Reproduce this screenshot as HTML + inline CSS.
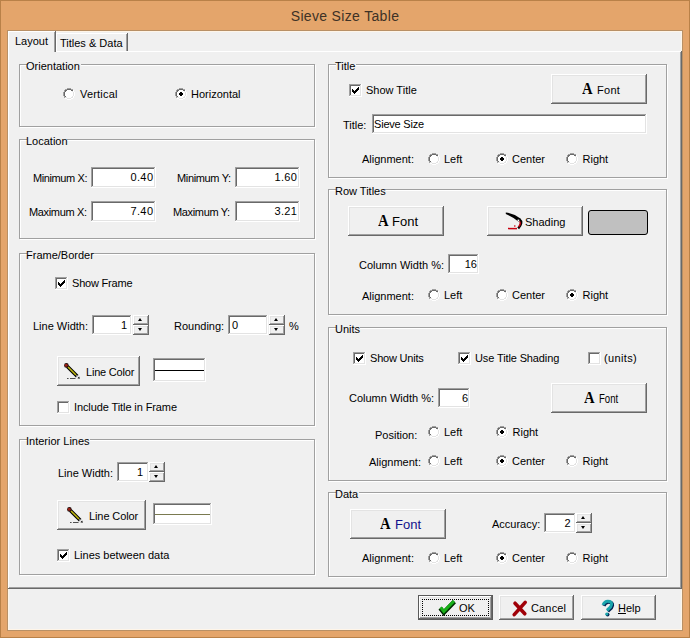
<!DOCTYPE html><html><head><meta charset="utf-8"><style>
html,body{margin:0;padding:0}
body{width:690px;height:638px;position:relative;overflow:hidden;background:#e4a56b;font-family:"Liberation Sans",sans-serif;font-size:11px;color:#000}
.t{position:absolute;line-height:13px;white-space:pre}
.gg{position:absolute;box-sizing:border-box;border:1px solid #a0a0a0}
.gw{position:absolute;box-sizing:border-box;border:1px solid #fff}
.lb{position:absolute;background:#f0f0f0}
.btn,.sb{position:absolute;box-sizing:border-box;background:#f0f0f0;box-shadow:inset -1px -1px #696969,inset 1px 1px #fff,inset -2px -2px #a0a0a0,inset 2px 2px #e3e3e3}
.ed{position:absolute;box-sizing:border-box;background:#fff;box-shadow:inset -1px -1px #fff,inset 1px 1px #a0a0a0,inset -2px -2px #e3e3e3,inset 2px 2px #696969}
.cb{position:absolute;width:13px;height:13px;box-sizing:border-box;background:#fff;box-shadow:inset -1px -1px #fff,inset 1px 1px #a0a0a0,inset -2px -2px #e3e3e3,inset 2px 2px #696969}
.rd{position:absolute;width:12px;height:12px}
.au,.ad{position:absolute;left:5px;width:0;height:0;border-left:2.5px solid transparent;border-right:2.5px solid transparent}
.au{top:3px;border-bottom:3px solid #000}
.ad{top:3px;border-top:3px solid #000}
.af{position:absolute;font-family:"Liberation Serif",serif;font-weight:bold;font-size:17px;line-height:20px;transform:scaleX(0.86);transform-origin:0 0}
svg{display:block}
</style></head><body>
<div style="position:absolute;left:0;top:0;width:690px;height:638px;box-sizing:border-box;border:1px solid #b98148"></div>
<div style="position:absolute;left:7px;top:30px;width:676px;height:601px;box-sizing:border-box;border:1px solid #b89066"></div>
<div class="t" style="left:0;width:690px;text-align:center;top:7px;line-height:18px;font-size:14px;letter-spacing:0.33px;color:#3e3226">Sieve Size Table</div>
<div style="position:absolute;left:8px;top:31px;width:674px;height:599px;background:#f0f0f0;box-sizing:border-box;border:1px solid #fff5e8"></div>
<div style="position:absolute;left:8px;top:51px;width:674px;height:538px;box-sizing:border-box;background:#f0f0f0;box-shadow:inset -1px -1px #696969,inset 1px 1px #fff,inset -2px -2px #a0a0a0"></div>
<div style="position:absolute;left:56px;top:33px;width:72px;height:18px;box-sizing:border-box;background:#f0f0f0;box-shadow:inset -1px 0 #696969,inset 1px 1px #fff,inset -2px 0 #a0a0a0"></div>
<div style="position:absolute;left:8px;top:31px;width:48px;height:21px;box-sizing:border-box;background:#f0f0f0;box-shadow:inset -1px 0 #696969,inset 1px 1px #fff,inset -2px 0 #a0a0a0"></div>
<div class="t" style="left:15px;top:35px;">Layout</div>
<div class="t" style="left:60px;top:37px;">Titles &amp; Data</div>
<div class="gw" style="left:20px;top:65px;width:296px;height:63px"></div>
<div class="gg" style="left:19px;top:64px;width:296px;height:63px"></div>
<div class="lb" style="left:27px;top:57px;width:54px;height:14px"></div>
<div class="t" style="left:26px;top:60px;">Orientation</div>
<div class="rd" style="left:63px;top:88px"><svg width="12" height="12" style="position:absolute;left:0;top:0" shape-rendering="crispEdges"><path fill="#a0a0a0" d="M4 0h4v1h-4zM2 1h2v1h-2zM8 1h2v1h-2zM1 2h1v2h-1zM0 4h1v4h-1zM1 8h1v2h-1z"/><path fill="#fff" d="M10 2h1v2h-1zM11 4h1v4h-1zM10 8h1v2h-1zM8 10h2v1h-2zM2 10h2v1h-2zM4 11h4v1h-4z"/><path fill="#696969" d="M4 1h4v1h-4zM2 2h2v1h-2zM8 2h2v1h-2zM2 3h1v1h-1zM1 4h1v4h-1zM2 8h1v1h-1z"/><path fill="#e3e3e3" d="M9 3h1v1h-1zM10 4h1v4h-1zM9 8h1v1h-1zM8 9h2v1h-2zM2 9h2v1h-2zM4 10h4v1h-4z"/><path fill="#fff" d="M4 2h4v1h-4zM3 3h6v1h-6zM2 4h8v4h-8zM3 8h6v1h-6zM4 9h4v1h-4z"/></svg></div>
<div class="t" style="left:80px;top:88px;letter-spacing:0.2px;">Vertical</div>
<div class="rd" style="left:175px;top:88px"><svg width="12" height="12" style="position:absolute;left:0;top:0" shape-rendering="crispEdges"><path fill="#a0a0a0" d="M4 0h4v1h-4zM2 1h2v1h-2zM8 1h2v1h-2zM1 2h1v2h-1zM0 4h1v4h-1zM1 8h1v2h-1z"/><path fill="#fff" d="M10 2h1v2h-1zM11 4h1v4h-1zM10 8h1v2h-1zM8 10h2v1h-2zM2 10h2v1h-2zM4 11h4v1h-4z"/><path fill="#696969" d="M4 1h4v1h-4zM2 2h2v1h-2zM8 2h2v1h-2zM2 3h1v1h-1zM1 4h1v4h-1zM2 8h1v1h-1z"/><path fill="#e3e3e3" d="M9 3h1v1h-1zM10 4h1v4h-1zM9 8h1v1h-1zM8 9h2v1h-2zM2 9h2v1h-2zM4 10h4v1h-4z"/><path fill="#fff" d="M4 2h4v1h-4zM3 3h6v1h-6zM2 4h8v4h-8zM3 8h6v1h-6zM4 9h4v1h-4z"/><path fill="#000" d="M5 4h2v1h-2zM4 5h4v2h-4zM5 7h2v1h-2z"/></svg></div>
<div class="t" style="left:191px;top:88px;">Horizontal</div>
<div class="gw" style="left:20px;top:140px;width:296px;height:100px"></div>
<div class="gg" style="left:19px;top:139px;width:296px;height:100px"></div>
<div class="lb" style="left:27px;top:132px;width:40px;height:14px"></div>
<div class="t" style="left:26px;top:135px;">Location</div>
<div class="t" style="left:33px;top:172px;letter-spacing:-0.4px;">Minimum X:</div>
<div class="ed" style="left:91px;top:167px;width:65px;height:21px;"></div>
<div class="t" style="left:-46.599999999999994px;width:200px;text-align:right;top:171px;letter-spacing:0.4px;">0.40</div>
<div class="t" style="left:177px;top:172px;letter-spacing:-0.35px;">Minimum Y:</div>
<div class="ed" style="left:235px;top:167px;width:65px;height:21px;"></div>
<div class="t" style="left:97.39999999999998px;width:200px;text-align:right;top:171px;letter-spacing:0.4px;">1.60</div>
<div class="t" style="left:29px;top:206px;letter-spacing:-0.35px;">Maximum X:</div>
<div class="ed" style="left:91px;top:201px;width:65px;height:21px;"></div>
<div class="t" style="left:-46.599999999999994px;width:200px;text-align:right;top:205px;letter-spacing:0.4px;">7.40</div>
<div class="t" style="left:173px;top:206px;letter-spacing:-0.35px;">Maximum Y:</div>
<div class="ed" style="left:235px;top:201px;width:65px;height:21px;"></div>
<div class="t" style="left:97.39999999999998px;width:200px;text-align:right;top:205px;letter-spacing:0.4px;">3.21</div>
<div class="gw" style="left:20px;top:254px;width:296px;height:173px"></div>
<div class="gg" style="left:19px;top:253px;width:296px;height:173px"></div>
<div class="lb" style="left:27px;top:246px;width:65px;height:14px"></div>
<div class="t" style="left:26px;top:249px;">Frame/Border</div>
<div class="cb" style="left:55px;top:277px"><svg width="7" height="7" style="position:absolute;left:3px;top:3px" shape-rendering="crispEdges"><path fill="#000" d="M0 2h1v3h-1zM1 3h1v3h-1zM2 4h1v3h-1zM3 3h1v3h-1zM4 2h1v3h-1zM5 1h1v3h-1zM6 0h1v3h-1z"/></svg></div>
<div class="t" style="left:72px;top:277px;letter-spacing:-0.2px;">Show Frame</div>
<div class="t" style="left:33px;top:320px;">Line Width:</div>
<div class="ed" style="left:92px;top:315px;width:40px;height:20px;"></div>
<div class="t" style="left:-73px;width:200px;text-align:right;top:319px;">1</div>
<div class="sb" style="left:133px;top:315px;width:16px;height:10px;"><div class="au"></div></div>
<div class="sb" style="left:133px;top:325px;width:16px;height:10px;"><div class="ad"></div></div>
<div class="t" style="left:174px;top:320px;">Rounding:</div>
<div class="ed" style="left:228px;top:315px;width:40px;height:20px;"></div>
<div class="t" style="left:232px;top:319px;">0</div>
<div class="sb" style="left:269px;top:315px;width:16px;height:10px;"><div class="au"></div></div>
<div class="sb" style="left:269px;top:325px;width:16px;height:10px;"><div class="ad"></div></div>
<div class="t" style="left:289px;top:320px;">%</div>
<div class="btn" style="left:57px;top:356px;width:83px;height:30px;"></div>
<svg style="position:absolute;left:62px;top:361px" width="20" height="20"><line x1="5.4" y1="5.4" x2="15.2" y2="15.2" stroke="#000" stroke-width="3.6"/><line x1="5.8" y1="5.8" x2="14" y2="14" stroke="#c4bc10" stroke-width="1.5"/><circle cx="4.4" cy="4.4" r="2.3" fill="#1a0a08"/><circle cx="4.2" cy="4.2" r="1.5" fill="#9a2014"/><line x1="14.4" y1="14.4" x2="15.8" y2="15.8" stroke="#d8d8d8" stroke-width="1.4"/><path d="M17.8 17.8l-2.4 -0.6l1.8 -1.8z" fill="#000"/><path d="M5 17.5h1.6M8 17.5h5.5" stroke="#505050" stroke-width="1"/></svg>
<div class="t" style="left:86px;top:366px;letter-spacing:-0.2px;">Line Color</div>
<div class="ed" style="left:153px;top:358px;width:53px;height:24px;"></div>
<div style="position:absolute;left:155px;top:370px;width:49px;height:1px;background:#000"></div>
<div class="cb" style="left:57px;top:401px"></div>
<div class="t" style="left:74px;top:401px;letter-spacing:-0.1px;">Include Title in Frame</div>
<div class="gw" style="left:20px;top:440px;width:296px;height:136px"></div>
<div class="gg" style="left:19px;top:439px;width:296px;height:136px"></div>
<div class="lb" style="left:27px;top:432px;width:63px;height:14px"></div>
<div class="t" style="left:26px;top:435px;">Interior Lines</div>
<div class="t" style="left:58px;top:467px;">Line Width:</div>
<div class="ed" style="left:117px;top:462px;width:32px;height:20px;"></div>
<div class="t" style="left:-57px;width:200px;text-align:right;top:466px;">1</div>
<div class="sb" style="left:149px;top:462px;width:16px;height:10px;"><div class="au"></div></div>
<div class="sb" style="left:149px;top:472px;width:16px;height:10px;"><div class="ad"></div></div>
<div class="btn" style="left:57px;top:500px;width:89px;height:30px;"></div>
<svg style="position:absolute;left:65px;top:505px" width="20" height="20"><line x1="5.4" y1="5.4" x2="15.2" y2="15.2" stroke="#000" stroke-width="3.6"/><line x1="5.8" y1="5.8" x2="14" y2="14" stroke="#c4bc10" stroke-width="1.5"/><circle cx="4.4" cy="4.4" r="2.3" fill="#1a0a08"/><circle cx="4.2" cy="4.2" r="1.5" fill="#9a2014"/><line x1="14.4" y1="14.4" x2="15.8" y2="15.8" stroke="#d8d8d8" stroke-width="1.4"/><path d="M17.8 17.8l-2.4 -0.6l1.8 -1.8z" fill="#000"/><path d="M5 17.5h1.6M8 17.5h5.5" stroke="#505050" stroke-width="1"/></svg>
<div class="t" style="left:89px;top:510px;letter-spacing:-0.1px;">Line Color</div>
<div class="ed" style="left:153px;top:503px;width:59px;height:22px;"></div>
<div style="position:absolute;left:155px;top:514px;width:55px;height:1px;background:#7a7a50"></div>
<div class="cb" style="left:57px;top:549px"><svg width="7" height="7" style="position:absolute;left:3px;top:3px" shape-rendering="crispEdges"><path fill="#000" d="M0 2h1v3h-1zM1 3h1v3h-1zM2 4h1v3h-1zM3 3h1v3h-1zM4 2h1v3h-1zM5 1h1v3h-1zM6 0h1v3h-1z"/></svg></div>
<div class="t" style="left:74px;top:549px;">Lines between data</div>
<div class="gw" style="left:329px;top:65px;width:339px;height:114px"></div>
<div class="gg" style="left:328px;top:64px;width:339px;height:114px"></div>
<div class="lb" style="left:336px;top:57px;width:20px;height:14px"></div>
<div class="t" style="left:335px;top:60px;">Title</div>
<div class="cb" style="left:349px;top:84px"><svg width="7" height="7" style="position:absolute;left:3px;top:3px" shape-rendering="crispEdges"><path fill="#000" d="M0 2h1v3h-1zM1 3h1v3h-1zM2 4h1v3h-1zM3 3h1v3h-1zM4 2h1v3h-1zM5 1h1v3h-1zM6 0h1v3h-1z"/></svg></div>
<div class="t" style="left:366px;top:84px;">Show Title</div>
<div class="btn" style="left:551px;top:74px;width:96px;height:30px;"></div>
<div class="af" style="left:582px;top:79px">A</div>
<div class="t" style="left:597px;top:84px;letter-spacing:0.3px;">Font</div>
<div class="t" style="left:343px;top:119px;">Title:</div>
<div class="ed" style="left:372px;top:114px;width:275px;height:20px;"></div>
<div class="t" style="left:374px;top:118px;letter-spacing:-0.2px;">Sieve Size</div>
<div class="t" style="left:362px;top:153px;">Alignment:</div>
<div class="rd" style="left:428px;top:153px"><svg width="12" height="12" style="position:absolute;left:0;top:0" shape-rendering="crispEdges"><path fill="#a0a0a0" d="M4 0h4v1h-4zM2 1h2v1h-2zM8 1h2v1h-2zM1 2h1v2h-1zM0 4h1v4h-1zM1 8h1v2h-1z"/><path fill="#fff" d="M10 2h1v2h-1zM11 4h1v4h-1zM10 8h1v2h-1zM8 10h2v1h-2zM2 10h2v1h-2zM4 11h4v1h-4z"/><path fill="#696969" d="M4 1h4v1h-4zM2 2h2v1h-2zM8 2h2v1h-2zM2 3h1v1h-1zM1 4h1v4h-1zM2 8h1v1h-1z"/><path fill="#e3e3e3" d="M9 3h1v1h-1zM10 4h1v4h-1zM9 8h1v1h-1zM8 9h2v1h-2zM2 9h2v1h-2zM4 10h4v1h-4z"/><path fill="#fff" d="M4 2h4v1h-4zM3 3h6v1h-6zM2 4h8v4h-8zM3 8h6v1h-6zM4 9h4v1h-4z"/></svg></div>
<div class="t" style="left:444px;top:153px;">Left</div>
<div class="rd" style="left:496px;top:153px"><svg width="12" height="12" style="position:absolute;left:0;top:0" shape-rendering="crispEdges"><path fill="#a0a0a0" d="M4 0h4v1h-4zM2 1h2v1h-2zM8 1h2v1h-2zM1 2h1v2h-1zM0 4h1v4h-1zM1 8h1v2h-1z"/><path fill="#fff" d="M10 2h1v2h-1zM11 4h1v4h-1zM10 8h1v2h-1zM8 10h2v1h-2zM2 10h2v1h-2zM4 11h4v1h-4z"/><path fill="#696969" d="M4 1h4v1h-4zM2 2h2v1h-2zM8 2h2v1h-2zM2 3h1v1h-1zM1 4h1v4h-1zM2 8h1v1h-1z"/><path fill="#e3e3e3" d="M9 3h1v1h-1zM10 4h1v4h-1zM9 8h1v1h-1zM8 9h2v1h-2zM2 9h2v1h-2zM4 10h4v1h-4z"/><path fill="#fff" d="M4 2h4v1h-4zM3 3h6v1h-6zM2 4h8v4h-8zM3 8h6v1h-6zM4 9h4v1h-4z"/><path fill="#000" d="M5 4h2v1h-2zM4 5h4v2h-4zM5 7h2v1h-2z"/></svg></div>
<div class="t" style="left:512px;top:153px;">Center</div>
<div class="rd" style="left:566px;top:153px"><svg width="12" height="12" style="position:absolute;left:0;top:0" shape-rendering="crispEdges"><path fill="#a0a0a0" d="M4 0h4v1h-4zM2 1h2v1h-2zM8 1h2v1h-2zM1 2h1v2h-1zM0 4h1v4h-1zM1 8h1v2h-1z"/><path fill="#fff" d="M10 2h1v2h-1zM11 4h1v4h-1zM10 8h1v2h-1zM8 10h2v1h-2zM2 10h2v1h-2zM4 11h4v1h-4z"/><path fill="#696969" d="M4 1h4v1h-4zM2 2h2v1h-2zM8 2h2v1h-2zM2 3h1v1h-1zM1 4h1v4h-1zM2 8h1v1h-1z"/><path fill="#e3e3e3" d="M9 3h1v1h-1zM10 4h1v4h-1zM9 8h1v1h-1zM8 9h2v1h-2zM2 9h2v1h-2zM4 10h4v1h-4z"/><path fill="#fff" d="M4 2h4v1h-4zM3 3h6v1h-6zM2 4h8v4h-8zM3 8h6v1h-6zM4 9h4v1h-4z"/></svg></div>
<div class="t" style="left:582.5px;top:153px;">Right</div>
<div class="gw" style="left:329px;top:190px;width:339px;height:126px"></div>
<div class="gg" style="left:328px;top:189px;width:339px;height:126px"></div>
<div class="lb" style="left:336px;top:182px;width:49px;height:14px"></div>
<div class="t" style="left:335px;top:185px;">Row Titles</div>
<div class="btn" style="left:348px;top:206px;width:96px;height:30px;"></div>
<div class="af" style="left:378px;top:211px">A</div>
<div class="t" style="left:392px;top:214px;font-size:13px;line-height:15px">Font</div>
<div class="btn" style="left:487px;top:206px;width:96px;height:30px;"></div>
<div class="t" style="left:525px;top:216px;">Shading</div>
<svg style="position:absolute;left:500px;top:208px" width="28" height="26"><path d="M5.8 4.4 Q13.5 5.4 20.4 10.4 L18.6 13.8 Q13 8.8 5.8 6 Z" fill="#000"/><path d="M19.4 11.2 Q23.6 14.6 18.2 20.4" stroke="#000" stroke-width="2.4" fill="none"/><path d="M19.6 13.4 Q21.4 15.6 18.6 19" stroke="#d00010" stroke-width="1.3" fill="none"/><rect x="17.6" y="11.6" width="1.6" height="1.6" fill="#fff"/><path d="M8 20.6 L17 20.6" stroke="#c80010" stroke-width="1.5"/><rect x="14" y="17.4" width="1.5" height="1.2" fill="#c80010"/></svg>
<div style="position:absolute;left:588px;top:210px;width:60px;height:25px;box-sizing:border-box;border:1px solid #000;border-radius:3px;background:#c0c0c0"></div>
<div class="t" style="left:359px;top:259px;">Column Width %:</div>
<div class="ed" style="left:448px;top:254px;width:31px;height:20px;"></div>
<div class="t" style="left:277px;width:200px;text-align:right;top:258px;">16</div>
<div class="t" style="left:362px;top:290px;">Alignment:</div>
<div class="rd" style="left:428px;top:289px"><svg width="12" height="12" style="position:absolute;left:0;top:0" shape-rendering="crispEdges"><path fill="#a0a0a0" d="M4 0h4v1h-4zM2 1h2v1h-2zM8 1h2v1h-2zM1 2h1v2h-1zM0 4h1v4h-1zM1 8h1v2h-1z"/><path fill="#fff" d="M10 2h1v2h-1zM11 4h1v4h-1zM10 8h1v2h-1zM8 10h2v1h-2zM2 10h2v1h-2zM4 11h4v1h-4z"/><path fill="#696969" d="M4 1h4v1h-4zM2 2h2v1h-2zM8 2h2v1h-2zM2 3h1v1h-1zM1 4h1v4h-1zM2 8h1v1h-1z"/><path fill="#e3e3e3" d="M9 3h1v1h-1zM10 4h1v4h-1zM9 8h1v1h-1zM8 9h2v1h-2zM2 9h2v1h-2zM4 10h4v1h-4z"/><path fill="#fff" d="M4 2h4v1h-4zM3 3h6v1h-6zM2 4h8v4h-8zM3 8h6v1h-6zM4 9h4v1h-4z"/></svg></div>
<div class="t" style="left:444px;top:289px;">Left</div>
<div class="rd" style="left:496px;top:289px"><svg width="12" height="12" style="position:absolute;left:0;top:0" shape-rendering="crispEdges"><path fill="#a0a0a0" d="M4 0h4v1h-4zM2 1h2v1h-2zM8 1h2v1h-2zM1 2h1v2h-1zM0 4h1v4h-1zM1 8h1v2h-1z"/><path fill="#fff" d="M10 2h1v2h-1zM11 4h1v4h-1zM10 8h1v2h-1zM8 10h2v1h-2zM2 10h2v1h-2zM4 11h4v1h-4z"/><path fill="#696969" d="M4 1h4v1h-4zM2 2h2v1h-2zM8 2h2v1h-2zM2 3h1v1h-1zM1 4h1v4h-1zM2 8h1v1h-1z"/><path fill="#e3e3e3" d="M9 3h1v1h-1zM10 4h1v4h-1zM9 8h1v1h-1zM8 9h2v1h-2zM2 9h2v1h-2zM4 10h4v1h-4z"/><path fill="#fff" d="M4 2h4v1h-4zM3 3h6v1h-6zM2 4h8v4h-8zM3 8h6v1h-6zM4 9h4v1h-4z"/></svg></div>
<div class="t" style="left:512px;top:289px;">Center</div>
<div class="rd" style="left:566px;top:289px"><svg width="12" height="12" style="position:absolute;left:0;top:0" shape-rendering="crispEdges"><path fill="#a0a0a0" d="M4 0h4v1h-4zM2 1h2v1h-2zM8 1h2v1h-2zM1 2h1v2h-1zM0 4h1v4h-1zM1 8h1v2h-1z"/><path fill="#fff" d="M10 2h1v2h-1zM11 4h1v4h-1zM10 8h1v2h-1zM8 10h2v1h-2zM2 10h2v1h-2zM4 11h4v1h-4z"/><path fill="#696969" d="M4 1h4v1h-4zM2 2h2v1h-2zM8 2h2v1h-2zM2 3h1v1h-1zM1 4h1v4h-1zM2 8h1v1h-1z"/><path fill="#e3e3e3" d="M9 3h1v1h-1zM10 4h1v4h-1zM9 8h1v1h-1zM8 9h2v1h-2zM2 9h2v1h-2zM4 10h4v1h-4z"/><path fill="#fff" d="M4 2h4v1h-4zM3 3h6v1h-6zM2 4h8v4h-8zM3 8h6v1h-6zM4 9h4v1h-4z"/><path fill="#000" d="M5 4h2v1h-2zM4 5h4v2h-4zM5 7h2v1h-2z"/></svg></div>
<div class="t" style="left:582.5px;top:289px;">Right</div>
<div class="gw" style="left:329px;top:328px;width:339px;height:154px"></div>
<div class="gg" style="left:328px;top:327px;width:339px;height:154px"></div>
<div class="lb" style="left:336px;top:320px;width:24px;height:14px"></div>
<div class="t" style="left:335px;top:323px;">Units</div>
<div class="cb" style="left:353px;top:352px"><svg width="7" height="7" style="position:absolute;left:3px;top:3px" shape-rendering="crispEdges"><path fill="#000" d="M0 2h1v3h-1zM1 3h1v3h-1zM2 4h1v3h-1zM3 3h1v3h-1zM4 2h1v3h-1zM5 1h1v3h-1zM6 0h1v3h-1z"/></svg></div>
<div class="t" style="left:370px;top:352px;letter-spacing:-0.2px;">Show Units</div>
<div class="cb" style="left:458px;top:352px"><svg width="7" height="7" style="position:absolute;left:3px;top:3px" shape-rendering="crispEdges"><path fill="#000" d="M0 2h1v3h-1zM1 3h1v3h-1zM2 4h1v3h-1zM3 3h1v3h-1zM4 2h1v3h-1zM5 1h1v3h-1zM6 0h1v3h-1z"/></svg></div>
<div class="t" style="left:475px;top:352px;letter-spacing:-0.12px;">Use Title Shading</div>
<div class="cb" style="left:588px;top:352px"></div>
<div class="t" style="left:604px;top:352px;letter-spacing:0.35px;">(units)</div>
<div class="t" style="left:349px;top:392px;">Column Width %:</div>
<div class="ed" style="left:438px;top:388px;width:32px;height:20px;"></div>
<div class="t" style="left:268px;width:200px;text-align:right;top:392px;">6</div>
<div class="btn" style="left:551px;top:383px;width:96px;height:30px;"></div>
<div class="af" style="left:584px;top:388px">A</div>
<div class="t" style="left:599px;top:392px;font-size:12px;line-height:15px;transform:scaleX(0.8);transform-origin:0 0">Font</div>
<div class="t" style="left:375px;top:429px;">Position:</div>
<div class="rd" style="left:428px;top:426px"><svg width="12" height="12" style="position:absolute;left:0;top:0" shape-rendering="crispEdges"><path fill="#a0a0a0" d="M4 0h4v1h-4zM2 1h2v1h-2zM8 1h2v1h-2zM1 2h1v2h-1zM0 4h1v4h-1zM1 8h1v2h-1z"/><path fill="#fff" d="M10 2h1v2h-1zM11 4h1v4h-1zM10 8h1v2h-1zM8 10h2v1h-2zM2 10h2v1h-2zM4 11h4v1h-4z"/><path fill="#696969" d="M4 1h4v1h-4zM2 2h2v1h-2zM8 2h2v1h-2zM2 3h1v1h-1zM1 4h1v4h-1zM2 8h1v1h-1z"/><path fill="#e3e3e3" d="M9 3h1v1h-1zM10 4h1v4h-1zM9 8h1v1h-1zM8 9h2v1h-2zM2 9h2v1h-2zM4 10h4v1h-4z"/><path fill="#fff" d="M4 2h4v1h-4zM3 3h6v1h-6zM2 4h8v4h-8zM3 8h6v1h-6zM4 9h4v1h-4z"/></svg></div>
<div class="t" style="left:444px;top:426px;">Left</div>
<div class="rd" style="left:496px;top:426px"><svg width="12" height="12" style="position:absolute;left:0;top:0" shape-rendering="crispEdges"><path fill="#a0a0a0" d="M4 0h4v1h-4zM2 1h2v1h-2zM8 1h2v1h-2zM1 2h1v2h-1zM0 4h1v4h-1zM1 8h1v2h-1z"/><path fill="#fff" d="M10 2h1v2h-1zM11 4h1v4h-1zM10 8h1v2h-1zM8 10h2v1h-2zM2 10h2v1h-2zM4 11h4v1h-4z"/><path fill="#696969" d="M4 1h4v1h-4zM2 2h2v1h-2zM8 2h2v1h-2zM2 3h1v1h-1zM1 4h1v4h-1zM2 8h1v1h-1z"/><path fill="#e3e3e3" d="M9 3h1v1h-1zM10 4h1v4h-1zM9 8h1v1h-1zM8 9h2v1h-2zM2 9h2v1h-2zM4 10h4v1h-4z"/><path fill="#fff" d="M4 2h4v1h-4zM3 3h6v1h-6zM2 4h8v4h-8zM3 8h6v1h-6zM4 9h4v1h-4z"/><path fill="#000" d="M5 4h2v1h-2zM4 5h4v2h-4zM5 7h2v1h-2z"/></svg></div>
<div class="t" style="left:512.5px;top:426px;">Right</div>
<div class="t" style="left:369px;top:456px;">Alignment:</div>
<div class="rd" style="left:428px;top:455px"><svg width="12" height="12" style="position:absolute;left:0;top:0" shape-rendering="crispEdges"><path fill="#a0a0a0" d="M4 0h4v1h-4zM2 1h2v1h-2zM8 1h2v1h-2zM1 2h1v2h-1zM0 4h1v4h-1zM1 8h1v2h-1z"/><path fill="#fff" d="M10 2h1v2h-1zM11 4h1v4h-1zM10 8h1v2h-1zM8 10h2v1h-2zM2 10h2v1h-2zM4 11h4v1h-4z"/><path fill="#696969" d="M4 1h4v1h-4zM2 2h2v1h-2zM8 2h2v1h-2zM2 3h1v1h-1zM1 4h1v4h-1zM2 8h1v1h-1z"/><path fill="#e3e3e3" d="M9 3h1v1h-1zM10 4h1v4h-1zM9 8h1v1h-1zM8 9h2v1h-2zM2 9h2v1h-2zM4 10h4v1h-4z"/><path fill="#fff" d="M4 2h4v1h-4zM3 3h6v1h-6zM2 4h8v4h-8zM3 8h6v1h-6zM4 9h4v1h-4z"/></svg></div>
<div class="t" style="left:444px;top:455px;">Left</div>
<div class="rd" style="left:496px;top:455px"><svg width="12" height="12" style="position:absolute;left:0;top:0" shape-rendering="crispEdges"><path fill="#a0a0a0" d="M4 0h4v1h-4zM2 1h2v1h-2zM8 1h2v1h-2zM1 2h1v2h-1zM0 4h1v4h-1zM1 8h1v2h-1z"/><path fill="#fff" d="M10 2h1v2h-1zM11 4h1v4h-1zM10 8h1v2h-1zM8 10h2v1h-2zM2 10h2v1h-2zM4 11h4v1h-4z"/><path fill="#696969" d="M4 1h4v1h-4zM2 2h2v1h-2zM8 2h2v1h-2zM2 3h1v1h-1zM1 4h1v4h-1zM2 8h1v1h-1z"/><path fill="#e3e3e3" d="M9 3h1v1h-1zM10 4h1v4h-1zM9 8h1v1h-1zM8 9h2v1h-2zM2 9h2v1h-2zM4 10h4v1h-4z"/><path fill="#fff" d="M4 2h4v1h-4zM3 3h6v1h-6zM2 4h8v4h-8zM3 8h6v1h-6zM4 9h4v1h-4z"/><path fill="#000" d="M5 4h2v1h-2zM4 5h4v2h-4zM5 7h2v1h-2z"/></svg></div>
<div class="t" style="left:512px;top:455px;">Center</div>
<div class="rd" style="left:566px;top:455px"><svg width="12" height="12" style="position:absolute;left:0;top:0" shape-rendering="crispEdges"><path fill="#a0a0a0" d="M4 0h4v1h-4zM2 1h2v1h-2zM8 1h2v1h-2zM1 2h1v2h-1zM0 4h1v4h-1zM1 8h1v2h-1z"/><path fill="#fff" d="M10 2h1v2h-1zM11 4h1v4h-1zM10 8h1v2h-1zM8 10h2v1h-2zM2 10h2v1h-2zM4 11h4v1h-4z"/><path fill="#696969" d="M4 1h4v1h-4zM2 2h2v1h-2zM8 2h2v1h-2zM2 3h1v1h-1zM1 4h1v4h-1zM2 8h1v1h-1z"/><path fill="#e3e3e3" d="M9 3h1v1h-1zM10 4h1v4h-1zM9 8h1v1h-1zM8 9h2v1h-2zM2 9h2v1h-2zM4 10h4v1h-4z"/><path fill="#fff" d="M4 2h4v1h-4zM3 3h6v1h-6zM2 4h8v4h-8zM3 8h6v1h-6zM4 9h4v1h-4z"/></svg></div>
<div class="t" style="left:582.5px;top:455px;">Right</div>
<div class="gw" style="left:329px;top:493px;width:339px;height:85px"></div>
<div class="gg" style="left:328px;top:492px;width:339px;height:85px"></div>
<div class="lb" style="left:336px;top:485px;width:23px;height:14px"></div>
<div class="t" style="left:335px;top:488px;">Data</div>
<div class="btn" style="left:350px;top:509px;width:96px;height:30px;"></div>
<div class="af" style="left:380px;top:514px">A</div>
<div class="t" style="left:395px;top:517px;font-size:13px;line-height:15px;color:#10108c">Font</div>
<div class="t" style="left:492px;top:518px;">Accuracy:</div>
<div class="ed" style="left:544px;top:513px;width:32px;height:20px;"></div>
<div class="t" style="left:370.5px;width:200px;text-align:right;top:517px;">2</div>
<div class="sb" style="left:576px;top:513px;width:16px;height:10px;"><div class="au"></div></div>
<div class="sb" style="left:576px;top:523px;width:16px;height:10px;"><div class="ad"></div></div>
<div class="t" style="left:362px;top:552px;">Alignment:</div>
<div class="rd" style="left:428px;top:552px"><svg width="12" height="12" style="position:absolute;left:0;top:0" shape-rendering="crispEdges"><path fill="#a0a0a0" d="M4 0h4v1h-4zM2 1h2v1h-2zM8 1h2v1h-2zM1 2h1v2h-1zM0 4h1v4h-1zM1 8h1v2h-1z"/><path fill="#fff" d="M10 2h1v2h-1zM11 4h1v4h-1zM10 8h1v2h-1zM8 10h2v1h-2zM2 10h2v1h-2zM4 11h4v1h-4z"/><path fill="#696969" d="M4 1h4v1h-4zM2 2h2v1h-2zM8 2h2v1h-2zM2 3h1v1h-1zM1 4h1v4h-1zM2 8h1v1h-1z"/><path fill="#e3e3e3" d="M9 3h1v1h-1zM10 4h1v4h-1zM9 8h1v1h-1zM8 9h2v1h-2zM2 9h2v1h-2zM4 10h4v1h-4z"/><path fill="#fff" d="M4 2h4v1h-4zM3 3h6v1h-6zM2 4h8v4h-8zM3 8h6v1h-6zM4 9h4v1h-4z"/></svg></div>
<div class="t" style="left:444px;top:552px;">Left</div>
<div class="rd" style="left:496px;top:552px"><svg width="12" height="12" style="position:absolute;left:0;top:0" shape-rendering="crispEdges"><path fill="#a0a0a0" d="M4 0h4v1h-4zM2 1h2v1h-2zM8 1h2v1h-2zM1 2h1v2h-1zM0 4h1v4h-1zM1 8h1v2h-1z"/><path fill="#fff" d="M10 2h1v2h-1zM11 4h1v4h-1zM10 8h1v2h-1zM8 10h2v1h-2zM2 10h2v1h-2zM4 11h4v1h-4z"/><path fill="#696969" d="M4 1h4v1h-4zM2 2h2v1h-2zM8 2h2v1h-2zM2 3h1v1h-1zM1 4h1v4h-1zM2 8h1v1h-1z"/><path fill="#e3e3e3" d="M9 3h1v1h-1zM10 4h1v4h-1zM9 8h1v1h-1zM8 9h2v1h-2zM2 9h2v1h-2zM4 10h4v1h-4z"/><path fill="#fff" d="M4 2h4v1h-4zM3 3h6v1h-6zM2 4h8v4h-8zM3 8h6v1h-6zM4 9h4v1h-4z"/><path fill="#000" d="M5 4h2v1h-2zM4 5h4v2h-4zM5 7h2v1h-2z"/></svg></div>
<div class="t" style="left:512px;top:552px;">Center</div>
<div class="rd" style="left:566px;top:552px"><svg width="12" height="12" style="position:absolute;left:0;top:0" shape-rendering="crispEdges"><path fill="#a0a0a0" d="M4 0h4v1h-4zM2 1h2v1h-2zM8 1h2v1h-2zM1 2h1v2h-1zM0 4h1v4h-1zM1 8h1v2h-1z"/><path fill="#fff" d="M10 2h1v2h-1zM11 4h1v4h-1zM10 8h1v2h-1zM8 10h2v1h-2zM2 10h2v1h-2zM4 11h4v1h-4z"/><path fill="#696969" d="M4 1h4v1h-4zM2 2h2v1h-2zM8 2h2v1h-2zM2 3h1v1h-1zM1 4h1v4h-1zM2 8h1v1h-1z"/><path fill="#e3e3e3" d="M9 3h1v1h-1zM10 4h1v4h-1zM9 8h1v1h-1zM8 9h2v1h-2zM2 9h2v1h-2zM4 10h4v1h-4z"/><path fill="#fff" d="M4 2h4v1h-4zM3 3h6v1h-6zM2 4h8v4h-8zM3 8h6v1h-6zM4 9h4v1h-4z"/></svg></div>
<div class="t" style="left:582.5px;top:552px;">Right</div>
<div style="position:absolute;left:418px;top:595px;width:75px;height:25px;box-sizing:border-box;border:1px solid #5a5a5a;background:#f0f0f0;box-shadow:inset -1px -1px #696969,inset 1px 1px #fff,inset -2px -2px #a0a0a0,inset 2px 2px #e3e3e3"></div>
<div style="position:absolute;left:422px;top:599px;width:67px;height:17px;box-sizing:border-box;border:1px dotted #000"></div>
<svg style="position:absolute;left:434px;top:596px" width="24" height="22"><path d="M6.2 12.2 L9.8 16.6 L20.4 5.6" stroke="#002a00" stroke-width="4.4" fill="none" stroke-linejoin="miter"/><path d="M6.6 11.4 L9.8 15.4 L20 5" stroke="#18b018" stroke-width="3" fill="none"/></svg>
<div class="t" style="left:459px;top:602px;">OK</div>
<div class="btn" style="left:499px;top:595px;width:75px;height:25px;"></div>
<svg style="position:absolute;left:508px;top:597px" width="22" height="22"><path d="M7 6.2 L16.8 16.8 M17.2 5.4 L6.2 17.6" stroke="#a00008" stroke-width="3.6" stroke-linecap="round"/></svg>
<div class="t" style="left:531px;top:602px;letter-spacing:0.15px;">Cancel</div>
<div class="btn" style="left:581px;top:595px;width:75px;height:25px;"></div>
<svg style="position:absolute;left:596px;top:597px" width="22" height="22"><path d="M7 8 Q8.5 4.2 11.8 4.2 Q16 4.2 15.6 7.6 Q15.2 10 12.4 12 L11 13.4" stroke="#002050" stroke-width="3.2" fill="none" transform="translate(0.9 0.9)"/><circle cx="11.6" cy="17.6" r="1.9" fill="#002050"/><path d="M7 8 Q8.5 4.2 11.8 4.2 Q16 4.2 15.6 7.6 Q15.2 10 12.4 12 L11 13.4" stroke="#1aa4ac" stroke-width="3" fill="none"/><circle cx="10.8" cy="17" r="1.6" fill="#1aa4ac"/></svg>
<div class="t" style="left:618px;top:602px;"><u>H</u>elp</div>
</body></html>
